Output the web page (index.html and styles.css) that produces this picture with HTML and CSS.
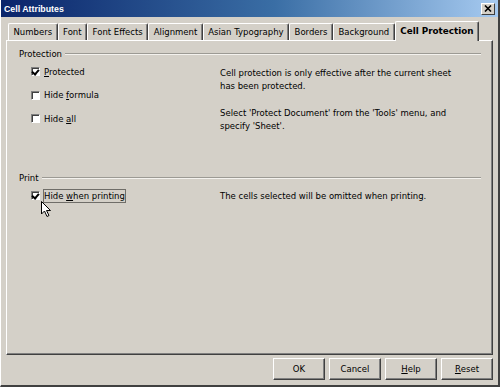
FILE: index.html
```html
<!DOCTYPE html>
<html>

<head>
    <meta charset="UTF-8">
    <title>Cell Attributes</title>
    <link rel="stylesheet" href="styles.css">
</head>

<body>
    <div class="window">
        <div class="titlebar">
            <span class="title">Cell Attributes</span>
            <span class="close">
                <svg width="8" height="7" viewBox="0 0 8 7">
                    <path d="M1 0.5 L7 6.5 M7 0.5 L1 6.5" stroke="#000" stroke-width="1.6" />
                </svg>
            </span>
        </div>
        <div class="content">
            <div class="tabs">
                <div class="tab">Numbers</div>
                <div class="tab">Font</div>
                <div class="tab">Font Effects</div>
                <div class="tab">Alignment</div>
                <div class="tab">Asian Typography</div>
                <div class="tab">Borders</div>
                <div class="tab">Background</div>
                <div class="tab active">Cell Protection</div>
            </div>
            <div class="panel">
                <!-- Protection group -->
                <div class="group">
                    <div class="group-head"><span>Protection</span><span class="rule"></span></div>
                    <div class="group-body">
                        <div class="options">
                            <div class="option"><span class="box checked"></span><span class="text"><u>P</u>rotected</span></div>
                            <div class="option"><span class="box"></span><span class="text">Hide <u>f</u>ormula</span></div>
                            <div class="option"><span class="box"></span><span class="text">Hide <u>a</u>ll</span></div>
                        </div>
                        <div class="notes">
                            <p>Cell protection is only effective after the current sheet<br>has been protected.</p>
                            <p>Select 'Protect Document' from the 'Tools' menu, and<br>specify 'Sheet'.</p>
                        </div>
                    </div>
                </div>
                <!-- Print group -->
                <div class="group print">
                    <div class="group-head"><span>Print</span><span class="rule"></span></div>
                    <div class="group-body">
                        <div class="options">
                            <div class="option"><span class="box checked"></span><span class="text focus">Hide <u>w</u>hen printing</span></div>
                        </div>
                        <div class="notes">
                            <p class="single">The cells selected will be omitted when printing.</p>
                        </div>
                    </div>
                </div>
                <svg class="cursor" width="11" height="17" viewBox="0 0 11 17">
                    <path d="M0.5 0.5 L0.5 13 L3.5 10 L6 15.5 L8 14.5 L5.5 9.5 L9.5 9.5 Z" fill="#fff" stroke="#000" stroke-width="1" />
                </svg>
            </div>
            <div class="buttons">
                <div class="button">OK</div>
                <div class="button">Cancel</div>
                <div class="button"><u>H</u>elp</div>
                <div class="button"><u>R</u>eset</div>
            </div>
        </div>
    </div>
</body>

</html>
```

FILE: styles.css
```css
body {
    margin: 0;
    background-color: #d4d0c8;
    font-family: "DejaVu Sans", sans-serif;
    font-size: 8.5px;
    color: #000000;
}

.window {
    width: 500px;
    height: 387px;
    box-sizing: border-box;
    display: flex;
    flex-direction: column;
    background-color: #d4d0c8;
    border-left: 1px solid #ffffff;
    border-right: 2px solid #404040;
    border-bottom: 2px solid #404040;
}

.titlebar {
    height: 17px;
    display: flex;
    align-items: center;
    justify-content: space-between;
    padding: 0 3px 0 3px;
    background: linear-gradient(to right, #0a246a, #3a6ea5 55%, #a6caf0);
}

.title {
    color: #ffffff;
    font-family: "Liberation Sans", sans-serif;
    font-weight: bold;
    font-size: 8.8px;
}

.close {
    width: 14px;
    height: 12px;
    box-sizing: border-box;
    display: flex;
    align-items: center;
    justify-content: center;
    background-color: #d4d0c8;
    border: 1px solid;
    border-color: #ffffff #404040 #404040 #ffffff;
}

.content {
    flex: 1;
    display: flex;
    flex-direction: column;
    padding: 0 5px 0 5px;
}

.tabs {
    height: 23px;
    display: flex;
    align-items: flex-end;
    padding-left: 2px;
    position: relative;
    z-index: 1;
}

.tab {
    height: 17px;
    box-sizing: border-box;
    padding: 0 4.5px;
    display: flex;
    align-items: center;
    border-top: 1px solid #ffffff;
    border-left: 1px solid #ffffff;
    border-right: 1px solid #404040;
    box-shadow: inset -1px 0 0 #808080;
    border-radius: 2px 2px 0 0;
}

.tab.active {
    height: 20px;
    margin-bottom: -1px;
    font-weight: bold;
    font-size: 8.8px;
    padding: 0 4.5px 1px 4.5px;
    background-color: #d4d0c8;
}

.panel {
    height: 315px;
    box-sizing: border-box;
    position: relative;
    padding: 6px 11px 0 12px;
    border: 1px solid;
    border-color: #ffffff #404040 #404040 #ffffff;
    box-shadow: inset -1px -1px 0 #808080;
}

.group-head {
    display: flex;
    align-items: center;
    gap: 3px;
    height: 13px;
}

.rule {
    flex: 1;
    height: 0;
    border-top: 1px solid #9c9a94;
    border-bottom: 1px solid #f4f2ee;
}

.group-body {
    display: grid;
    grid-template-columns: 189px 1fr;
    padding-left: 12px;
}

.option {
    height: 23.5px;
    display: flex;
    align-items: center;
    gap: 3px;
}

.box {
    width: 9px;
    height: 9px;
    box-sizing: border-box;
    background-color: #ffffff;
    border: 1px solid;
    border-color: #808080 #ffffff #ffffff #808080;
    box-shadow: inset 1px 1px 0 #404040;
    position: relative;
}

.box.checked::after {
    content: "";
    position: absolute;
    left: 1px;
    top: 0px;
    width: 3px;
    height: 5px;
    border: solid #000000;
    border-width: 0 2px 2px 0;
    transform: rotate(40deg);
}

.text {
    border: 1px solid transparent;
    padding: 1px 0 1px 0;
}

.text.focus {
    border-color: #6f6d68;
}

.notes p {
    margin: 6.5px 0 0 0;
    line-height: 13px;
}

.notes p + p {
    margin-top: 14px;
}

.print {
    margin-top: 38.5px;
}

.notes p.single {
    margin-top: 6px;
}

.cursor {
    position: absolute;
    left: 34px;
    top: 160px;
}

.buttons {
    display: flex;
    justify-content: flex-end;
    gap: 4px;
    padding-top: 3px;
}

.button {
    width: 52px;
    height: 22px;
    box-sizing: border-box;
    display: flex;
    align-items: center;
    justify-content: center;
    border: 1px solid;
    border-color: #ffffff #404040 #404040 #ffffff;
    box-shadow: inset -1px -1px 0 #808080;
}
```
